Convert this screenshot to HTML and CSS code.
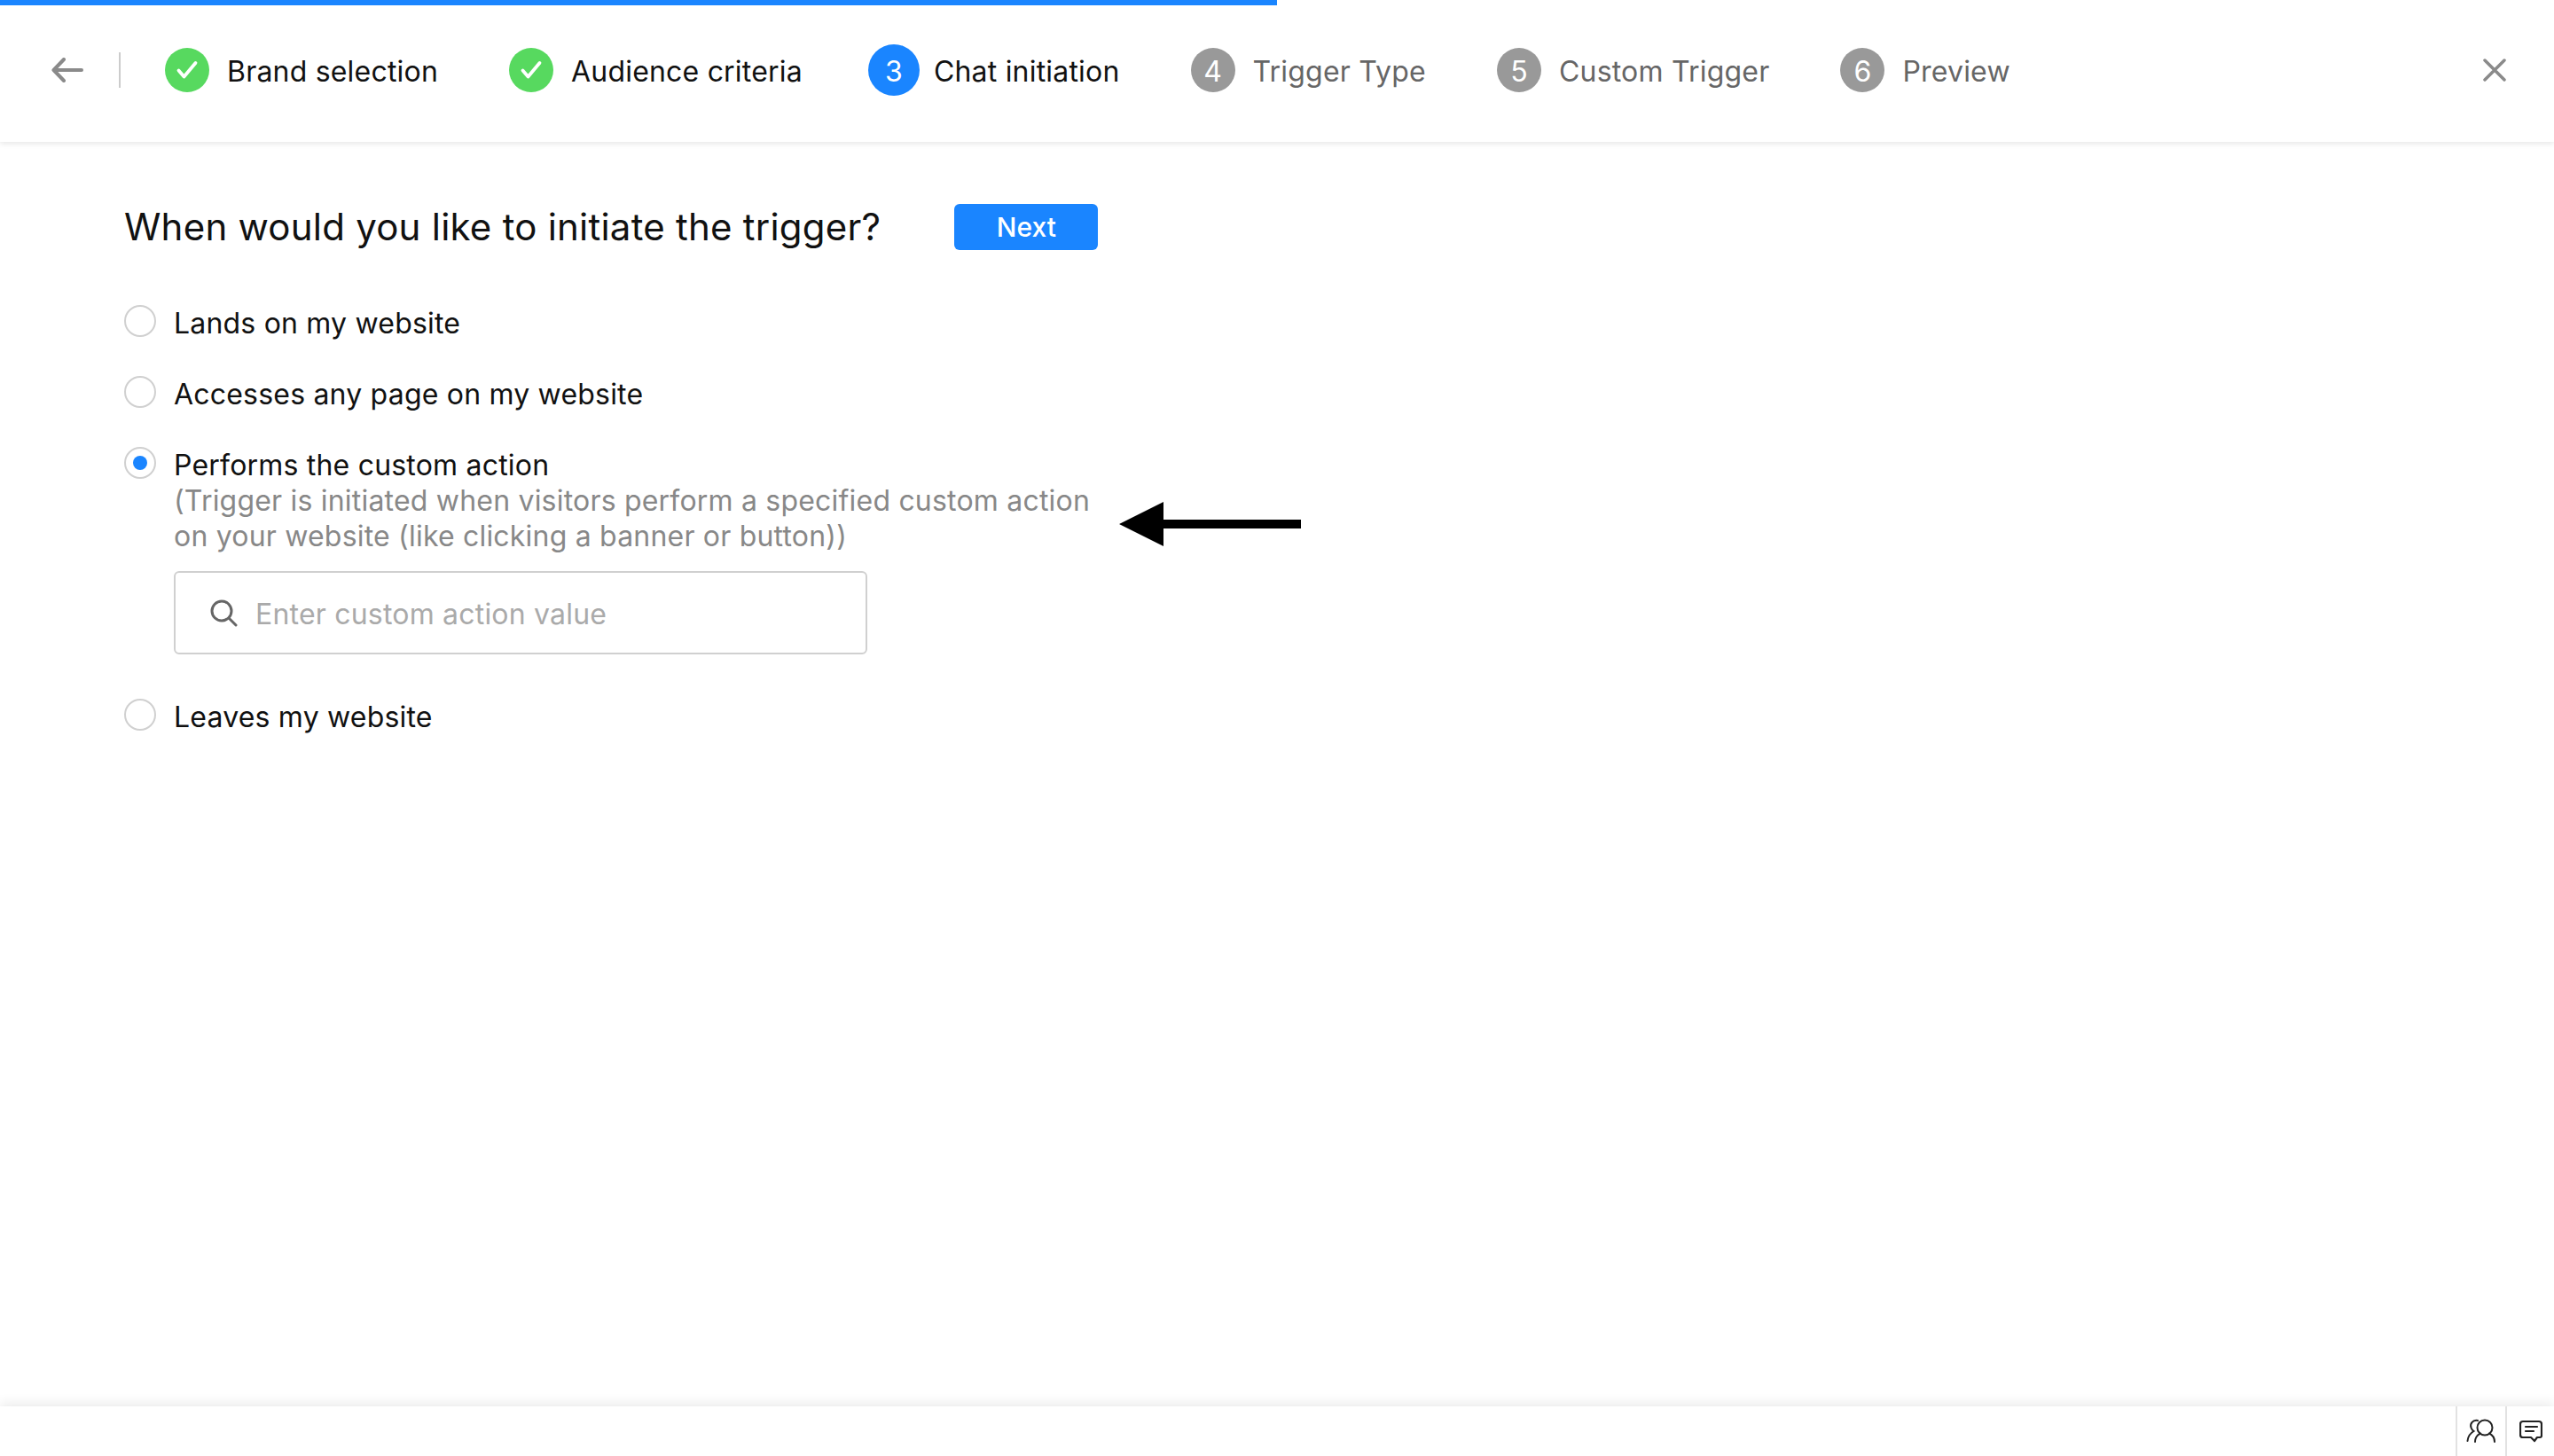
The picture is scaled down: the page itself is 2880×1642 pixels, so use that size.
FILE: index.html
```html
<!DOCTYPE html>
<html lang="en">
<head>
<meta charset="utf-8">
<title>Chat initiation</title>
<link rel="stylesheet" href="styles.css">
</head>
<body>
<div class="app">
  <header class="topbar">
    <div class="progress"><div class="progress-fill"></div></div>
    <div class="nav">
      <button class="icon-btn back" aria-label="Back">
        <svg width="36" height="28" viewBox="0 0 36 28" fill="none" stroke="#8a8a8a" stroke-width="4" stroke-linecap="round" stroke-linejoin="round"><path d="M34 14H3M14 2 2.500 14 14 26"/></svg>
      </button>
      <span class="nav-sep"></span>
      <ol class="steps">
        <li class="step done"><span class="badge"><svg width="26" height="22" viewBox="0 0 26 22" fill="none" stroke="#fff" stroke-width="3.800" stroke-linecap="round" stroke-linejoin="round"><path d="M3.500 11.500 9.500 18.500 22.500 3"/></svg></span><span class="step-label">Brand selection</span></li>
        <li class="step done"><span class="badge"><svg width="26" height="22" viewBox="0 0 26 22" fill="none" stroke="#fff" stroke-width="3.800" stroke-linecap="round" stroke-linejoin="round"><path d="M3.500 11.500 9.500 18.500 22.500 3"/></svg></span><span class="step-label">Audience criteria</span></li>
        <li class="step current"><span class="badge">3</span><span class="step-label">Chat initiation</span></li>
        <li class="step"><span class="badge">4</span><span class="step-label">Trigger Type</span></li>
        <li class="step"><span class="badge">5</span><span class="step-label">Custom Trigger</span></li>
        <li class="step"><span class="badge">6</span><span class="step-label">Preview</span></li>
      </ol>
      <button class="icon-btn close" aria-label="Close">
        <svg width="26" height="26" viewBox="0 0 26 26" fill="none" stroke="#8a8a8a" stroke-width="3.500" stroke-linecap="round"><path d="M2 2 24 24M24 2 2 24"/></svg>
      </button>
    </div>
  </header>

  <main class="content">
    <div class="title-row">
      <h1 class="title">When would you like to initiate the trigger?</h1>
      <button class="next">Next</button>
    </div>
    <div class="options">
      <div class="option"><span class="radio"></span><div class="option-body"><div class="option-label">Lands on my website</div></div></div>
      <div class="option"><span class="radio"></span><div class="option-body"><div class="option-label">Accesses any page on my website</div></div></div>
      <div class="option">
        <span class="radio checked"></span>
        <div class="option-body">
          <div class="option-label">Performs the custom action</div>
          <div class="option-desc">(Trigger is initiated when visitors perform a specified custom action<br>on your website (like clicking a banner or button))</div>
          <div class="search">
            <svg class="search-icon" width="32" height="32" viewBox="0 0 32 32" fill="none" stroke="#666" stroke-width="3" stroke-linecap="round"><circle cx="14" cy="14" r="11"/><path d="M22 22 30 30"/></svg>
            <span class="placeholder">Enter custom action value</span>
          </div>
          <svg class="annotation" width="206" height="50" viewBox="0 0 206 50"><path d="M0 25 50 0V20H205V30H50V50Z" fill="#000"/></svg>
        </div>
      </div>
      <div class="option"><span class="radio"></span><div class="option-body"><div class="option-label">Leaves my website</div></div></div>
    </div>
  </main>

  <footer class="bottombar">
    <div class="bottom-cell people">
      <svg width="34" height="28" viewBox="0 0 34 28" fill="none" stroke="#222" stroke-width="2" stroke-linecap="round"><circle cx="21" cy="10" r="8.500"/><path d="M10 26c0-5 3-8 6-9.500M32 26c0-5-3-8-6-9.500"/><path d="M13 2C7 1 4 6 5.500 10c.6 1.800 1.500 3 3 4C5 16 2 20 1.500 25"/></svg>
    </div>
    <div class="bottom-cell">
      <svg width="26" height="26" viewBox="0 0 26 26" fill="none" stroke="#222" stroke-width="2.200" stroke-linejoin="round" stroke-linecap="round"><path d="M4 2h18a3 3 0 0 1 3 3v13a2 2 0 0 1-2 2h-3l-3 4-4-4H4a3 3 0 0 1-3-3V5a3 3 0 0 1 3-3Z"/><path d="M7 8h13M7 13h9"/></svg>
    </div>
  </footer>
</div>
</body>
</html>
```
FILE: styles.css
```css
* { box-sizing: border-box; }
html, body { margin: 0; height: 100%; background: #fff; }
body { font-family: Inter, "Liberation Sans", sans-serif; color: #111; font-size: 32px; letter-spacing: .2px; }
.app { height: 100vh; display: flex; flex-direction: column; }

.topbar { height: 160px; flex: none; box-shadow: 0 2px 6px rgba(0,0,0,.1); background: #fff; position: relative; z-index: 1; }
.progress { height: 6px; }
.progress-fill { height: 100%; width: 1440px; background: #1a85ff; }
.nav { height: 146px; display: flex; align-items: center; padding: 0 54px 0 58px; }
.icon-btn { border: 0; padding: 0; background: none; display: flex; }
.nav-sep { width: 2px; height: 40px; background: #ccc; margin: 0 50px 0 40px; }
.steps { list-style: none; margin: 0; padding: 0; display: flex; align-items: center; gap: 80px; flex: 1; }
.step { display: flex; align-items: center; gap: 20px; color: #666; }
.badge { width: 50px; height: 50px; padding-top: 2px; border-radius: 50%; background: #999; color: #fff; display: flex; align-items: center; justify-content: center; flex: none; font-size: 32px; letter-spacing: 0; }
.step.done { color: #111; }
.step.done .badge { background: #57d95f; padding-top: 0; }
.step.current { color: #111; margin-left: -6px; gap: 16px; }
.step.current .badge { width: 58px; height: 58px; background: #1a85ff; }
.step-label { padding-top: 4px; line-height: 40px; white-space: nowrap; }

.content { flex: 1; padding: 70px 140px 0; position: relative; }
.title-row { display: flex; align-items: center; gap: 83px; height: 52px; }
.title { margin: 0; font-size: 42px; font-weight: 400; line-height: 52px; white-space: nowrap; letter-spacing: .23px; }
.next { width: 162px; height: 52px; border: 0; border-radius: 6px; background: #1a85ff; color: #fff; font: 500 30px Inter, "Liberation Sans", sans-serif; }

.options { display: flex; flex-direction: column; margin-top: 62px; }
.option { display: flex; gap: 20px; margin-bottom: 39px; }
.radio { width: 36px; height: 36px; border-radius: 50%; border: 2px solid #d0d0d0; background: #fff; flex: none; display: flex; align-items: center; justify-content: center; }
.radio.checked::after { content: ""; width: 16px; height: 16px; border-radius: 50%; background: #1a85ff; }
.option-body { position: relative; }
.option-label { padding-top: 1px; line-height: 40px; white-space: nowrap; }
.option-desc { line-height: 40px; color: #888; white-space: nowrap; }
.search { margin-top: 19px; margin-bottom: 11px; width: 782px; height: 94px; border: 2px solid #d0d0d0; border-radius: 6px; display: flex; align-items: center; gap: 20px; padding-left: 38px; }
.placeholder { color: #aaa; padding-top: 2px; }
.annotation { position: absolute; left: 1066px; top: 62px; }

.bottombar { height: 56px; flex: none; display: flex; justify-content: flex-end; box-shadow: 0 -4px 12px rgba(0,0,0,.08); background: #fff; }
.bottom-cell { width: 55px; border-left: 2px solid #e2e2e2; display: flex; align-items: center; justify-content: center; }
.bottom-cell.people { width: 56px; }
```
